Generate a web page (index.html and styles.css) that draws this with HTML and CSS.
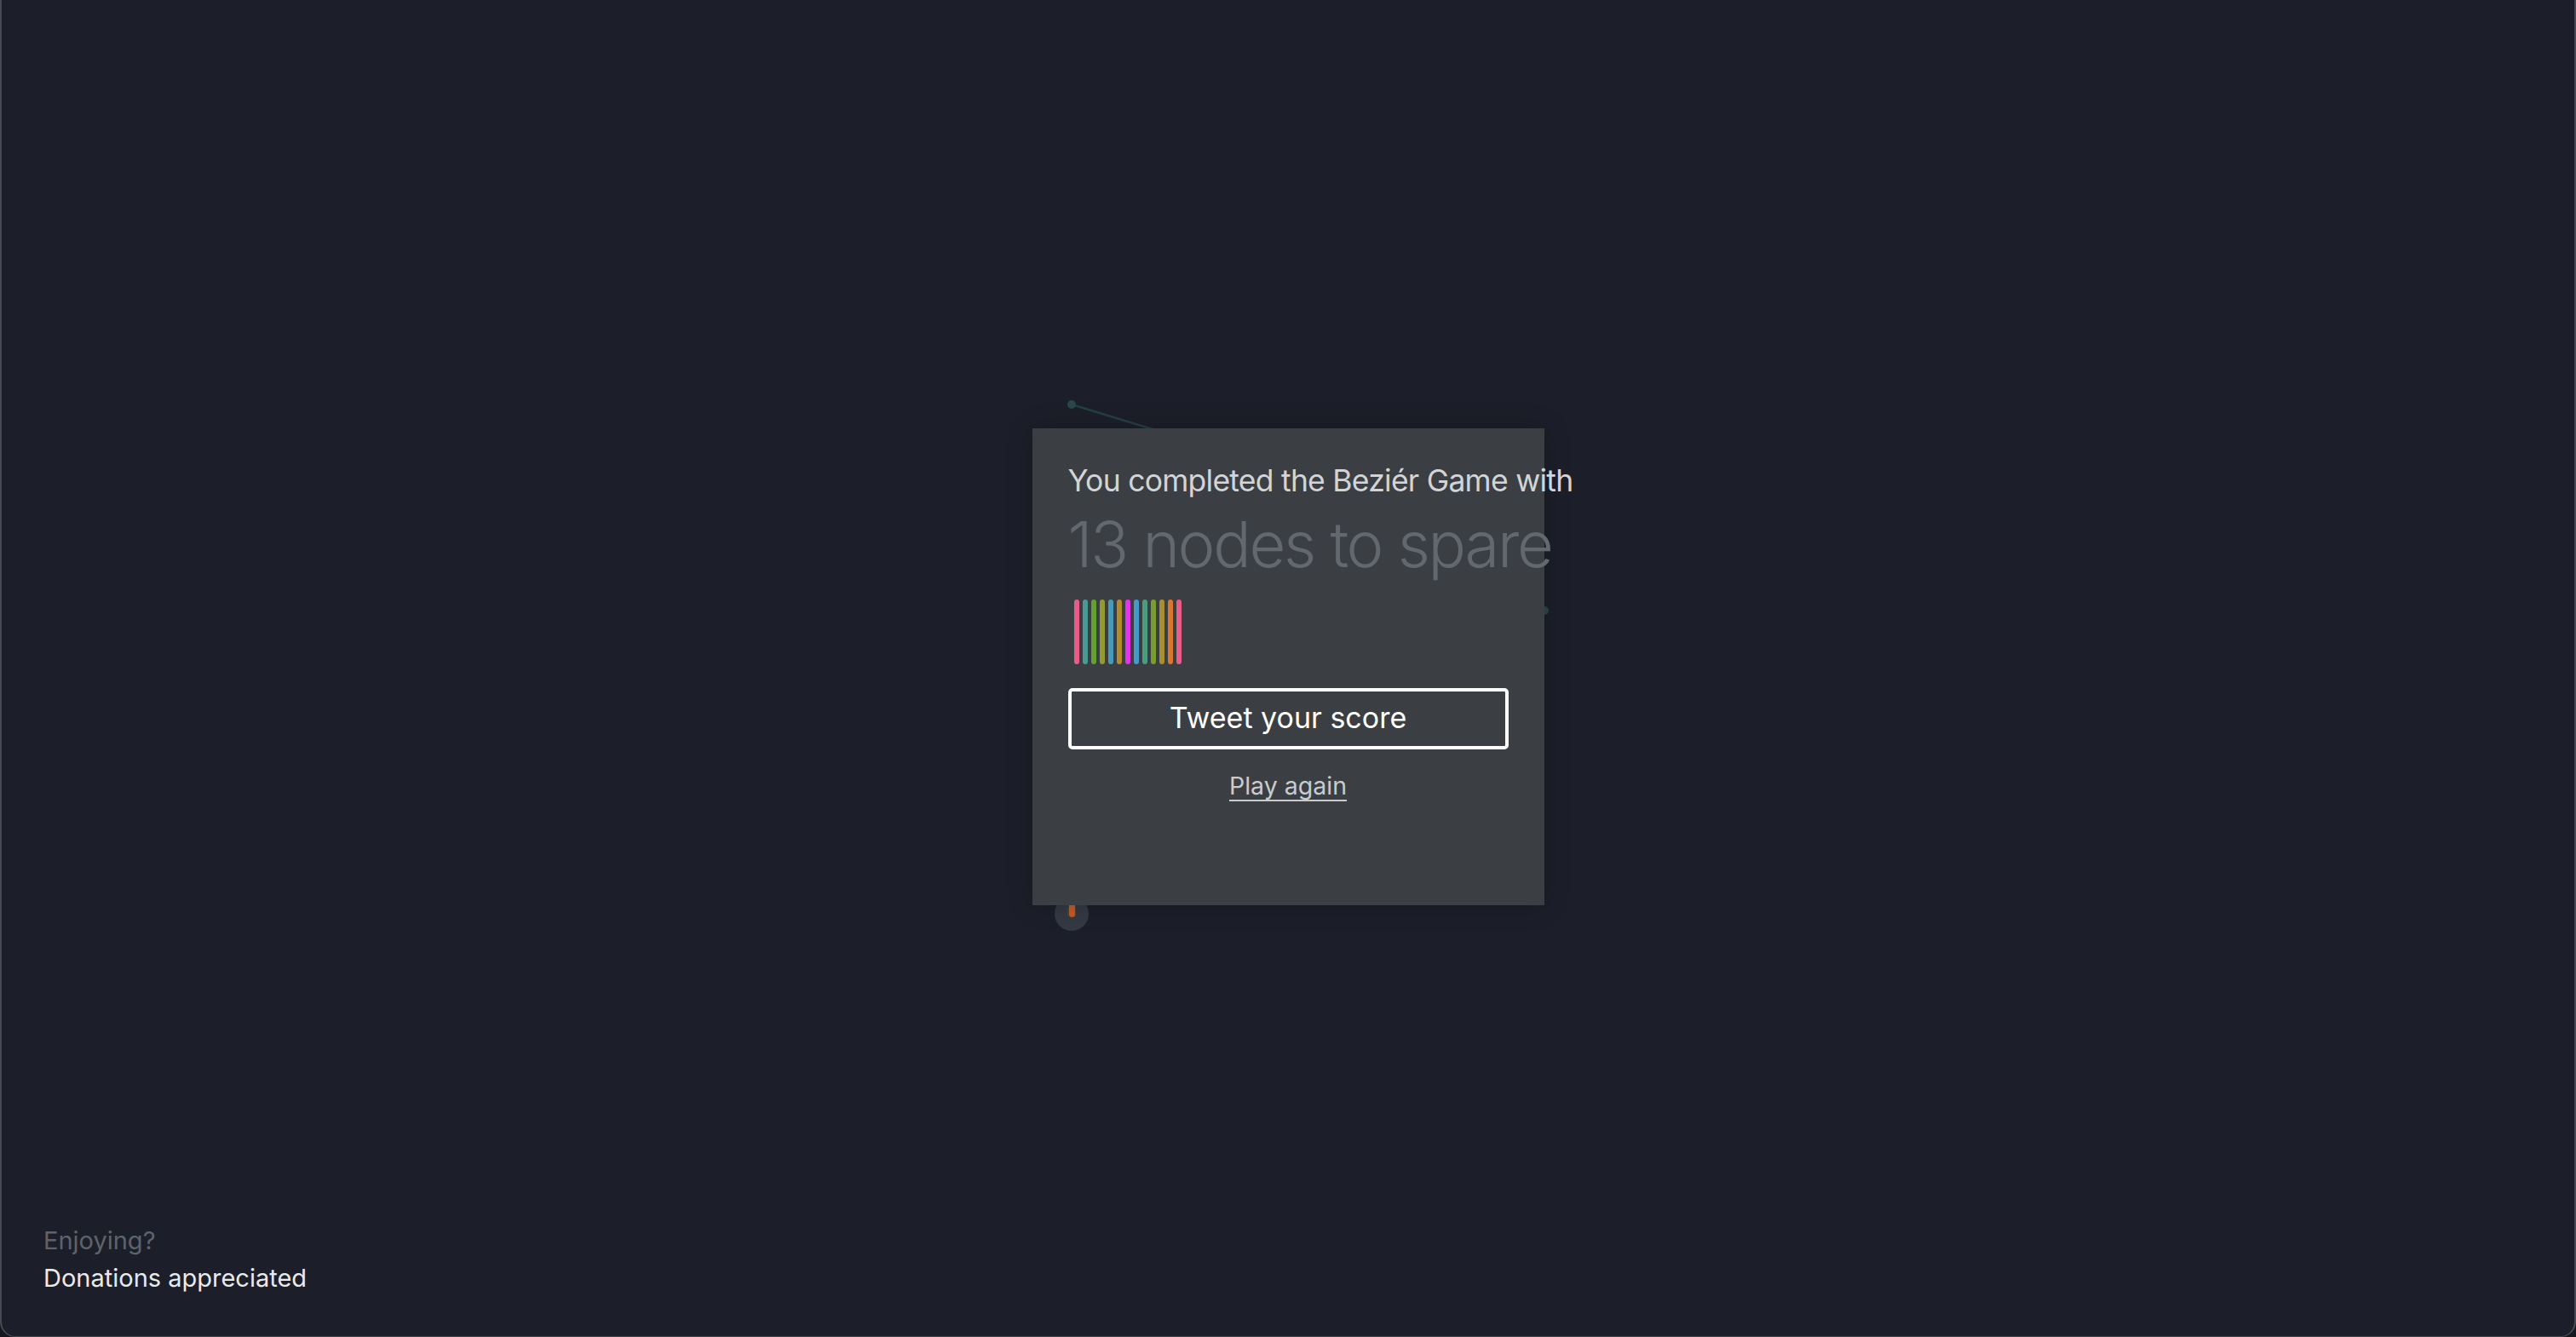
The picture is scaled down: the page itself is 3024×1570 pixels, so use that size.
FILE: index.html
```html
<!DOCTYPE html>
<html lang="en">
<head>
<meta charset="utf-8">
<title>Bezier Game</title>
<link rel="stylesheet" href="styles.css">
</head>
<body>
<div class="frame">
  <svg class="canvas" width="3020" height="1569" viewBox="0 0 3020 1569">
    <line x1="1256" y1="475" x2="1420" y2="525" stroke="#243f44" stroke-width="2.5"/>
    <circle cx="1256" cy="475" r="5" fill="#2b4749"/>
    <circle cx="1811" cy="717" r="5" fill="#2b4749"/>
    <circle cx="1256" cy="1073" r="20" fill="#353943"/>
    <rect x="1251" y="1066" width="10" height="10" fill="#5a3b2f"/>
    <rect x="1253" y="1030" width="7" height="47" rx="3.5" fill="#c65a24"/>
  </svg>
  <main class="stage">
    <section class="modal">
      <p class="lead">You completed the Beziér Game with</p>
      <h1 class="score">13 nodes to spare</h1>
      <div class="bars">
        <span class="bar c1"></span>
        <span class="bar c2"></span>
        <span class="bar c3"></span>
        <span class="bar c4"></span>
        <span class="bar c5"></span>
        <span class="bar c6"></span>
        <span class="bar c7"></span>
        <span class="bar c8"></span>
        <span class="bar c9"></span>
        <span class="bar c10"></span>
        <span class="bar c11"></span>
        <span class="bar c12"></span>
        <span class="bar c1"></span>
      </div>
      <button class="tweet">Tweet your score</button>
      <a class="again" href="#">Play again</a>
    </section>
  </main>
  <footer class="footer">
    <div class="muted">Enjoying?</div>
    <a class="donate" href="#">Donations appreciated</a>
  </footer>
</div>
</body>
</html>
```
FILE: styles.css
```css
html {
  background: #16181e;
}
body {
  margin: 0;
  font-family: Inter, "Noto Sans", "Liberation Sans", sans-serif;
}
.frame {
  box-sizing: border-box;
  width: 3024px;
  height: 1570px;
  background: #1c1f29;
  border: 2px solid #474a53;
  border-top: none;
  border-bottom-width: 1px;
  border-radius: 0 0 18px 18px;
  display: grid;
  grid-template: 1fr / 1fr;
  position: relative;
  overflow: hidden;
}
.canvas {
  position: absolute;
  left: 0;
  top: 0;
}
.stage {
  grid-area: 1 / 1;
  display: flex;
  align-items: center;
  justify-content: center;
  position: relative;
  z-index: 1;
}
.modal {
  box-sizing: border-box;
  width: 601px;
  height: 560px;
  background: #3b3f44;
  padding: 40px 42px 0 42px;
  display: flex;
  flex-direction: column;
  box-shadow: 0 0 28px rgba(0, 0, 0, 0.22);
  margin-top: -3px;
}
.lead {
  margin: 0;
  font-size: 35.5px;
  line-height: 44px;
  font-weight: 400;
  color: #d2d4d6;
  white-space: nowrap;
  letter-spacing: -0.75px;
}
.score {
  margin: 7px 0 0 0;
  font-size: 74px;
  line-height: 90px;
  font-weight: 300;
  color: #63686e;
  white-space: nowrap;
  letter-spacing: -2.3px;
}
.bars {
  display: flex;
  gap: 4px;
  margin: 20px 0 0 7px;
  height: 76px;
}
.bar {
  width: 6px;
  height: 76px;
  border-radius: 3px;
}
.c1 { background: #ea5c88; }
.c2 { background: #4a9a94; }
.c3 { background: #64a22f; }
.c4 { background: #939a2f; }
.c5 { background: #469cb8; }
.c6 { background: #b08c2e; }
.c7 { background: #e732ea; }
.c8 { background: #469ac8; }
.c9 { background: #4a9e7e; }
.c10 { background: #7a9e2e; }
.c11 { background: #a88f30; }
.c12 { background: #d8782e; }
.tweet {
  margin-top: 28px;
  box-sizing: border-box;
  width: 100%;
  height: 72px;
  background: transparent;
  border: 4px solid #ffffff;
  border-radius: 5px;
  color: #ffffff;
  font-family: Inter, "Noto Sans", "Liberation Sans", sans-serif;
  font-size: 34px;
  font-weight: 400;
  padding: 0 0 4px 0;
}
.again {
  margin-top: 25px;
  align-self: center;
  font-size: 28.5px;
  line-height: 36px;
  color: #c9cbcd;
  text-decoration: underline;
  text-underline-offset: 6px;
  text-decoration-thickness: 2px;
}
.footer {
  grid-area: 1 / 1;
  align-self: end;
  padding: 0 0 46px 49px;
  font-size: 29px;
  line-height: 44px;
  position: relative;
  z-index: 1;
}
.muted {
  color: #5e636b;
}
.donate {
  color: #e8eaec;
  text-decoration: none;
}
```
